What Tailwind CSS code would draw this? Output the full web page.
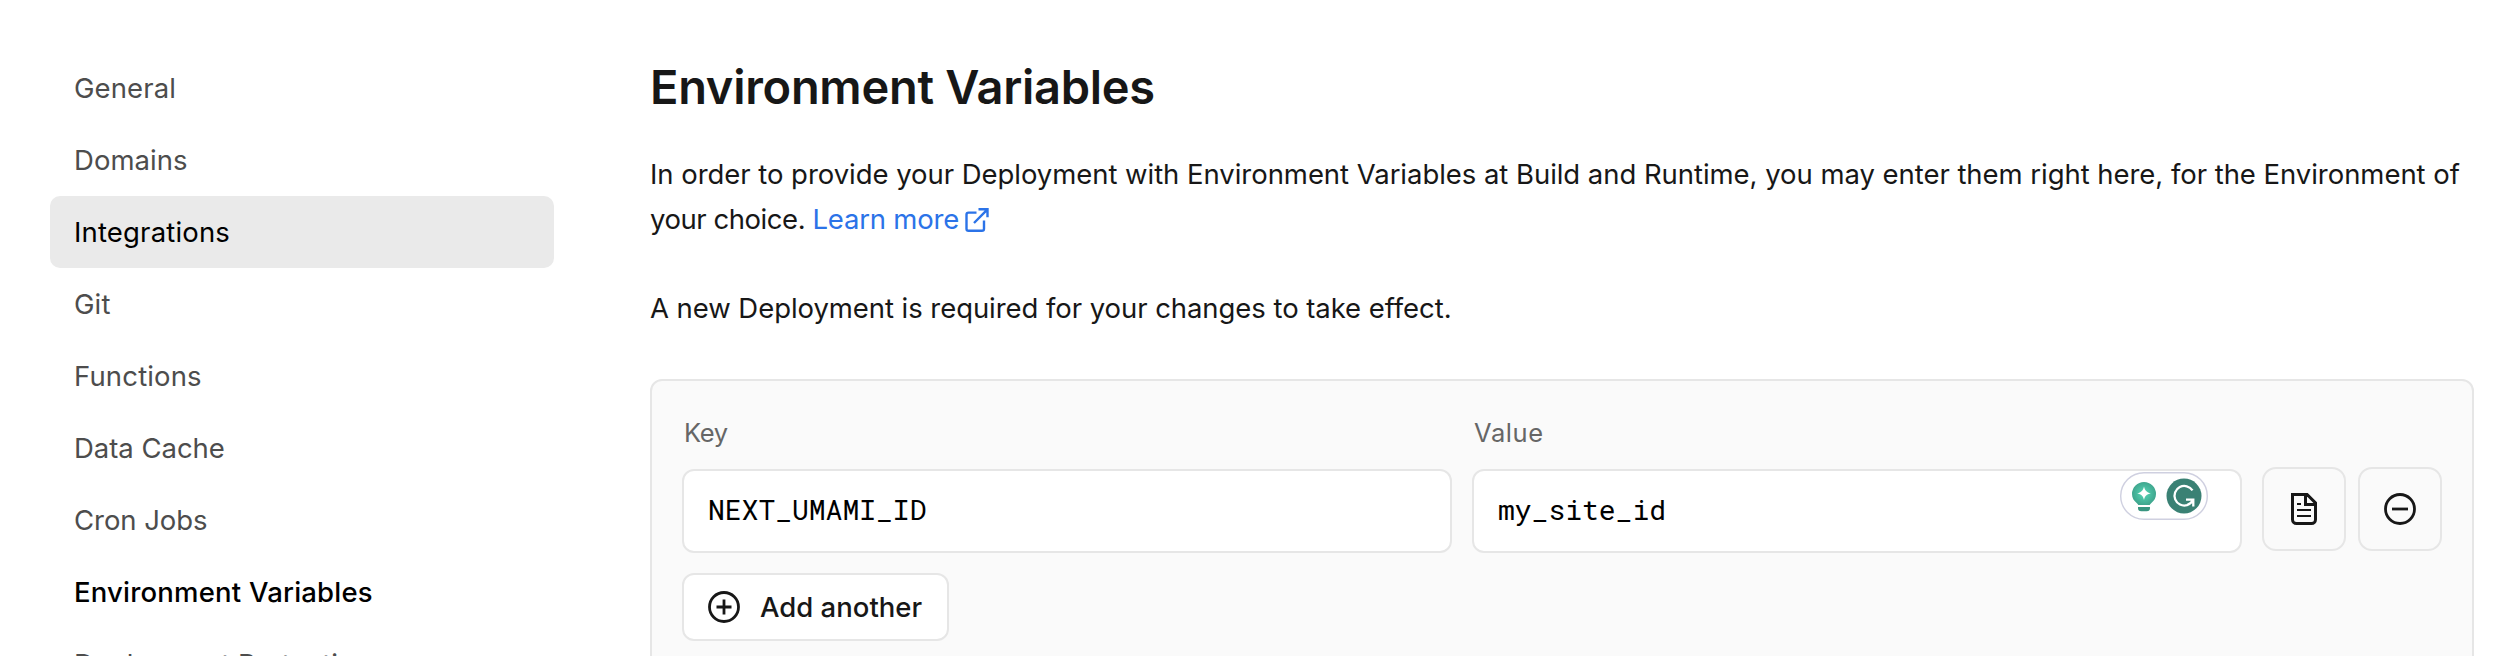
<!DOCTYPE html>
<html lang="en">
<head>
<meta charset="utf-8">
<title>Environment Variables</title>
<script src="https://cdn.jsdelivr.net/npm/@tailwindcss/browser@4"></script>
</head>
<body class="bg-white font-['Inter',sans-serif] text-[27.5px] text-[#171717]">
<div class="flex h-[656px] w-[2510px] overflow-hidden">
  <nav class="ml-[50px] mt-[52px] w-[504px] shrink-0 text-[#4d4d4d]">
    <a class="flex h-[72px] items-center px-6 pt-[2px] tracking-[0.1px]">General</a>
    <a class="flex h-[72px] items-center px-6 pt-[2px] tracking-[0.05px]">Domains</a>
    <a class="flex h-[72px] items-center rounded-[10px] bg-[#eaeaea] px-6 pt-[2px] tracking-[0.17px] text-black">Integrations</a>
    <a class="flex h-[72px] items-center px-6 pt-[2px] tracking-[0.1px]">Git</a>
    <a class="flex h-[72px] items-center px-6 pt-[2px] tracking-[0.15px]">Functions</a>
    <a class="flex h-[72px] items-center px-6 pt-[2px] tracking-[-0.03px]">Data Cache</a>
    <a class="flex h-[72px] items-center px-6 pt-[2px] tracking-[-0.05px]">Cron Jobs</a>
    <a class="flex h-[72px] items-center px-6 pt-[2px] font-medium tracking-[0.2px] text-black">Environment Variables</a>
    <a class="flex h-[72px] items-center px-6 pt-[2px]">Deployment Protection</a>
  </nav>
  <main class="ml-[96px] w-[1824px] shrink-0 pt-[59px]">
    <h1 class="text-[47px] font-semibold leading-[56px] tracking-[-0.28px]">Environment Variables</h1>
    <p class="mt-[37px] whitespace-nowrap leading-[45px] tracking-[-0.045px]">In order to provide your Deployment with Environment Variables at Build and Runtime, you may enter them right here, for the Environment of<br><span class="tracking-[-0.45px]">your choice. </span><a class="tracking-[-0.2px] text-[#2b73e8]">Learn more<svg class="ml-[6px] inline-block h-6 w-6 align-[-3px]" viewBox="0 0 24 24" fill="none" stroke="currentColor" stroke-width="2.4"><path d="M11.5 4.6H3.6a2.1 2.1 0 0 0-2.1 2.1v14a2.1 2.1 0 0 0 2.1 2.1h13.300a2.100 2.100 0 0 0 2.100-2.100V12.500M13.500 1.300h9v8M22.500 1.300 9 15"/></svg></a></p>
    <p class="mt-[44px] leading-[45px] tracking-[-0.06px]">A new Deployment is required for your changes to take effect.</p>
    <section class="mt-[48px] h-[400px] rounded-[12px] border-2 border-[#e6e6e6] bg-[#fafafa] px-[30px] pt-8">
      <div class="flex">
        <div class="w-[770px]">
          <div class="pl-[2px] text-[25.5px] leading-10 tracking-[-0.4px] text-[#666]">Key</div>
          <div class="mt-4 flex h-[84px] items-center rounded-[12px] border-2 border-[#e6e6e6] bg-white pb-[2px] pl-6 font-['Roboto_Mono',monospace] text-[28px] text-black">NEXT_UMAMI_ID</div>
        </div>
        <div class="ml-5 w-[770px]">
          <div class="pl-[2px] text-[25.5px] leading-10 tracking-[0.6px] text-[#666]">Value</div>
          <div class="relative mt-4 flex h-[84px] items-center rounded-[12px] border-2 border-[#e6e6e6] bg-white pb-[2px] pl-6 font-['Roboto_Mono',monospace] text-[28px] text-black">my_site_id
            <svg class="absolute right-8 top-px h-12 w-[88px]" viewBox="0 0 88 48" fill="none">
              <defs><radialGradient id="glow"><stop offset=".3" stop-color="#50c8aa"/><stop offset="1" stop-color="#3fa68e"/></radialGradient></defs>
              <rect x=".7" y=".7" width="86.600" height="46.600" rx="23.300" fill="#fff" stroke="#cfd0e0" stroke-width="1.400"/>
              <path d="M24 10a12 12 0 0 0-12 12c0 4.200 2 6.600 4.400 8.700 1 .9 1.600 1.500 1.900 2.300h11.400c.3-.8.9-1.400 1.900-2.300C34 28.600 36 26.200 36 22a12 12 0 0 0-12-12Z" fill="url(#glow)"/>
              <path d="M24 14.500c1 4.200 2.600 5.800 6.800 6.800-4.200 1-5.800 2.600-6.800 6.800-1-4.200-2.600-5.800-6.800-6.800 4.200-1 5.800-2.600 6.800-6.800Z" fill="#fff"/>
              <path d="M18 35h12v1a3.300 3.300 0 0 1-3.300 3.300h-5.400A3.300 3.300 0 0 1 18 36Z" fill="#389580"/>
              <circle cx="64" cy="24" r="17.500" fill="#3a8174"/>
              <path d="M72.500 18.400A9.800 9.800 0 1 0 67 33.200c2.800-1 4.700-2.700 5.700-5.100M66 27.600h7.300v6.900" stroke="#fff" stroke-width="2.300"/>
            </svg>
          </div>
        </div>
        <div class="ml-5 flex gap-3 pt-[54px]">
          <button class="flex h-[84px] w-[84px] items-center justify-center rounded-[14px] border-2 border-[#e6e6e6]">
            <svg class="h-8 w-8" viewBox="0 0 16 16" fill="none" stroke="currentColor" stroke-width="1.5"><path d="M2.250.750h7.300l4.200 4.200v8.300a2 2 0 0 1-2 2h-7.500a2 2 0 0 1-2-2ZM8.750.750v5h5"/><path d="M4.500 5.500h2M4.500 8.500h7M4.500 11.500h7" stroke-width="1.100"/></svg>
          </button>
          <button class="flex h-[84px] w-[84px] items-center justify-center rounded-[14px] border-2 border-[#e6e6e6]">
            <svg class="h-8 w-8" viewBox="0 0 16 16" fill="none" stroke="currentColor" stroke-width="1.400"><circle cx="8" cy="8" r="7.250"/><path d="M4 8h8"/></svg>
          </button>
        </div>
      </div>
      <button class="mt-5 flex h-[68px] w-[267px] items-center rounded-[12px] border-2 border-[#e6e6e6] bg-white pl-6 font-medium">
        <svg class="h-8 w-8" viewBox="0 0 16 16" fill="none" stroke="currentColor" stroke-width="1.400"><circle cx="8" cy="8" r="7.250"/><path d="M4.250 8h7.500M8 4.250v7.500"/></svg>
        <span class="ml-5 whitespace-nowrap pt-[2px]">Add another</span>
      </button>
    </section>
  </main>
</div>
</body>
</html>
